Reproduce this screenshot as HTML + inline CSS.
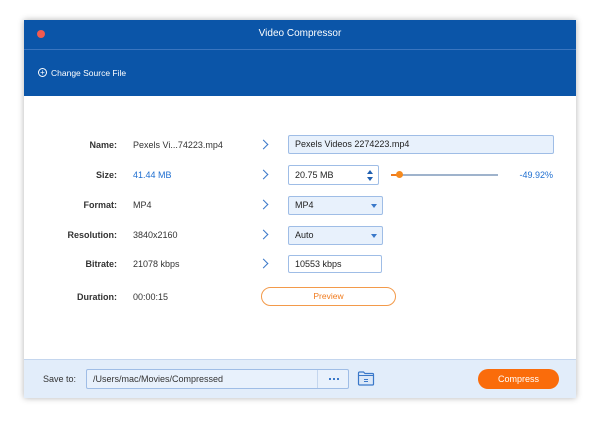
<!DOCTYPE html><html><head><style>
body{margin:0;width:600px;height:426px;background:#fff;font-family:"Liberation Sans",sans-serif;position:relative;overflow:hidden}
.win{position:absolute;left:24px;top:20px;width:552px;height:378px;background:#fff;box-shadow:0 0 6px rgba(0,0,0,.3);overflow:hidden}
.a{position:absolute}
.lbl{position:absolute;right:459px;font-size:9px;font-weight:bold;color:#333;text-align:right}
.val{position:absolute;left:109px;font-size:9px;color:#333}
.chev{position:absolute;left:236px;width:6px;height:6px;border-top:1.2px solid #3a78c9;border-right:1.2px solid #3a78c9;transform:rotate(45deg)}
.inp{position:absolute;background:#e8f1fc;border:1px solid #9fbde6;border-radius:2px;font-size:9px;color:#222;box-sizing:border-box;padding-left:6px;line-height:17px}
.dd:after{content:"";position:absolute;right:5px;top:7px;border-left:3.5px solid transparent;border-right:3.5px solid transparent;border-top:4px solid #3a78c9}
</style></head><body>
<div class="win">
<div class="a" style="left:0;top:0;width:552px;height:29px;background:#0b55a8;border-bottom:1px solid #3a75bf"></div>
<div class="a" style="left:13px;top:10px;width:8px;height:8px;border-radius:50%;background:#f25a4f"></div>
<div class="a" style="left:0;top:8px;width:552px;text-align:center;color:#fff;font-size:10px">Video Compressor</div>
<div class="a" style="left:0;top:30px;width:552px;height:46px;background:#0b55a8"></div>
<div class="a" style="left:14px;top:48px;width:7px;height:7px;border:1px solid #fff;border-radius:50%;color:#fff;font-size:8px;line-height:7px;text-align:center">+</div>
<div class="a" style="left:27px;top:48px;color:#fff;font-size:8.5px">Change Source File</div>

<div class="lbl" style="top:120px">Name:</div><div class="val" style="top:120px">Pexels Vi...74223.mp4</div>
<div class="lbl" style="top:150px">Size:</div><div class="val" style="top:150px;color:#1f6fd0">41.44 MB</div>
<div class="lbl" style="top:180px">Format:</div><div class="val" style="top:180px">MP4</div>
<div class="lbl" style="top:210px">Resolution:</div><div class="val" style="top:210px">3840x2160</div>
<div class="lbl" style="top:239px">Bitrate:</div><div class="val" style="top:239px">21078 kbps</div>
<div class="lbl" style="top:272px">Duration:</div><div class="val" style="top:272px">00:00:15</div>
<div class="chev" style="top:121px"></div><div class="chev" style="top:151px"></div><div class="chev" style="top:181px"></div><div class="chev" style="top:211px"></div><div class="chev" style="top:240px"></div>

<div class="inp" style="left:264px;top:115px;width:266px;height:19px">Pexels Videos 2274223.mp4</div>
<div class="inp" style="left:264px;top:145px;width:91px;height:20px;background:#fff;line-height:18px">20.75 MB
<div class="a" style="right:5px;top:4px;border-left:3px solid transparent;border-right:3px solid transparent;border-bottom:4px solid #1f5fb0"></div>
<div class="a" style="right:5px;top:11px;border-left:3px solid transparent;border-right:3px solid transparent;border-top:4px solid #1f5fb0"></div></div>
<div class="a" style="left:367px;top:154px;width:107px;height:1.5px;background:#9fb3cc"></div>
<div class="a" style="left:367px;top:154px;width:9px;height:1.5px;background:#f07b1e"></div>
<div class="a" style="left:372px;top:151px;width:7px;height:7px;border-radius:50%;background:#f58a1f"></div>
<div class="a" style="left:480px;top:150px;width:49px;text-align:right;font-size:9px;color:#1f6fd0">-49.92%</div>
<div class="inp dd" style="left:264px;top:176px;width:95px;height:19px">MP4</div>
<div class="inp dd" style="left:264px;top:206px;width:95px;height:19px">Auto</div>
<div class="inp" style="left:264px;top:235px;width:94px;height:18px;background:#fff;line-height:16px">10553 kbps</div>
<div class="a" style="left:237px;top:267px;width:135px;height:19px;border:1px solid #f39a4a;border-radius:10px;box-sizing:border-box;text-align:center;font-size:8.5px;line-height:17px;color:#f07b1e">Preview</div>

<div class="a" style="left:0;top:339px;width:552px;height:39px;background:#e2edfa;border-top:1px solid #c4d6ee"></div>
<div class="a" style="left:19px;top:354px;font-size:9px;color:#333">Save to:</div>
<div class="inp" style="left:62px;top:349px;width:263px;height:20px;line-height:18px;color:#333">/Users/mac/Movies/Compressed
<div class="a" style="left:230px;top:0;width:1px;height:18px;background:#c4d6ee"></div>
<div class="a" style="left:242px;top:8px;width:2px;height:2px;background:#3a78c9;box-shadow:4px 0 0 #3a78c9,8px 0 0 #3a78c9"></div></div>
<svg class="a" style="left:333px;top:351px" width="18" height="15" viewBox="0 0 18 15"><path d="M1.5 3.5 V2 a1 1 0 0 1 1-1 h4 l1.5 1.5 h7.5 a1 1 0 0 1 1 1 V13 a1 1 0 0 1-1 1 H2.5 a1 1 0 0 1-1-1 Z" fill="#dbe8f8" stroke="#3a78c9" stroke-width="1.2"/><path d="M1.5 4.5 H16.5" stroke="#3a78c9" stroke-width="1"/><path d="M7 8.5 h4 M7 10.5 h4" stroke="#3a78c9" stroke-width="1"/></svg>
<div class="a" style="left:454px;top:349px;width:81px;height:20px;border-radius:10px;background:#fa6c0b;color:#fff;font-size:9px;text-align:center;line-height:20px">Compress</div>
</div>
</body></html>
